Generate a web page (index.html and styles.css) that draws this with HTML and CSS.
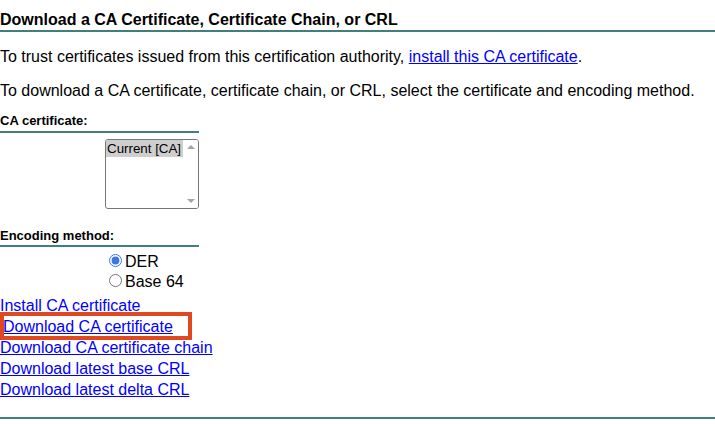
FILE: index.html
```html
<!DOCTYPE html>
<html>
<head>
<meta charset="utf-8">
<title>Download a CA Certificate, Certificate Chain, or CRL</title>
<link rel="stylesheet" href="styles.css">
</head>
<body>
<div class="page">
  <div class="header">Download a CA Certificate, Certificate Chain, or CRL</div>
  <p class="para first">To trust certificates issued from this certification authority, <a href="#">install this CA certificate</a>.</p>
  <p class="para">To download a CA certificate, certificate chain, or CRL, select the certificate and encoding method.</p>

  <div class="field-label">CA certificate:</div>
  <div class="listbox">
    <div class="options">
      <div class="option selected">Current [CA]</div>
    </div>
    <div class="scrollbar">
      <span class="arrow up"></span>
      <span class="arrow down"></span>
    </div>
  </div>

  <div class="field-label enc">Encoding method:</div>
  <div class="radios">
    <label class="radio"><input type="radio" name="enc" checked>DER</label>
    <label class="radio"><input type="radio" name="enc">Base 64</label>
  </div>

  <div class="links">
    <a href="#">Install CA certificate</a>
    <a href="#" class="highlighted">Download CA certificate</a>
    <a href="#">Download CA certificate chain</a>
    <a href="#">Download latest base CRL</a>
    <a href="#">Download latest delta CRL</a>
  </div>

  <div class="footer-rule"></div>

  <div class="annotation"></div>
</div>
</body>
</html>
```

FILE: styles.css
```css
html, body {
  margin: 0;
  padding: 0;
  background: #ffffff;
}

body {
  font-family: "Liberation Sans", Arial, sans-serif;
  font-size: 16px;
  color: #000000;
}

.page {
  position: relative;
  width: 715px;
  height: 424px;
  overflow: hidden;
}

a {
  color: #0000ff;
  text-decoration: underline;
}

.header {
  font-weight: bold;
  font-size: 16px;
  line-height: 18px;
  padding-top: 11px;
  padding-bottom: 1px;
  border-bottom: 2px solid #417f7c;
}

.para {
  margin: 16px 0 0 0;
  line-height: 18px;
}

.para.first {
  margin-top: 16px;
}

.field-label {
  width: 199px;
  font-weight: bold;
  font-size: 13px;
  line-height: 15px;
  margin-top: 13px;
  padding-bottom: 3px;
  border-bottom: 2px solid #417f7c;
}

.field-label.enc {
  margin-top: 19px;
  padding-bottom: 2px;
}

.listbox {
  margin: 6px 0 0 105px;
  width: 92px;
  height: 68px;
  border: 1px solid #767676;
  border-radius: 3px;
  display: flex;
  overflow: hidden;
}

.options {
  flex: 1;
  font-size: 13.33px;
  line-height: 17px;
}

.option {
  padding: 0 1px;
  white-space: nowrap;
}

.option.selected {
  background: #cecece;
}

.scrollbar {
  width: 15px;
  background: #ffffff;
  display: flex;
  flex-direction: column;
  justify-content: space-between;
  align-items: center;
  padding: 5px 0 5px 0;
}

.arrow {
  width: 0;
  height: 0;
  border-left: 4px solid transparent;
  border-right: 4px solid transparent;
}

.arrow.up {
  border-bottom: 4px solid #a3a3a3;
}

.arrow.down {
  border-top: 4px solid #a3a3a3;
}

.radios {
  display: flex;
  flex-direction: column;
  padding-left: 104px;
  margin-top: 4px;
}

.radio {
  line-height: 19px;
}

.radio input {
  margin: 3px 3px 0 5px;
  accent-color: #3b78e7;
}

.links {
  display: flex;
  flex-direction: column;
  align-items: flex-start;
  margin-top: 4px;
}

.links a {
  line-height: 21px;
}

.links a.highlighted {
  margin-left: 3px;
}

.footer-rule {
  margin-top: 17px;
  height: 2px;
  background: #417f7c;
}

.annotation {
  position: absolute;
  left: 0;
  top: 312px;
  width: 184px;
  height: 20px;
  border: 4px solid #e0481f;
}
```
